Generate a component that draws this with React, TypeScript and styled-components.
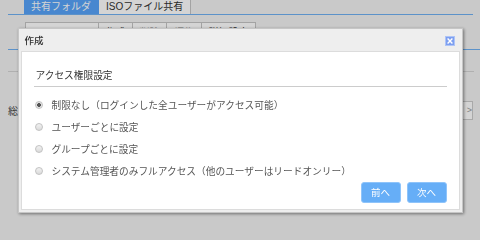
import styled, { createGlobalStyle } from "styled-components";

const GlobalStyle = createGlobalStyle`
  html, body {
    margin: 0;
    padding: 0;
    background: #f2f2f2;
    font-family: "Liberation Sans", "Noto Sans CJK JP", sans-serif;
  }
`;

const Page = styled.div`
  width: 480px;
  height: 240px;
  padding-left: 8px;
  box-sizing: border-box;
  overflow: hidden;
`;

const TabRow = styled.div`
  display: flex;
  padding-left: 16px;
  margin-right: 7px;
  border-bottom: 1px solid #6fb0f2;
`;

const Tab = styled.div<{ $active?: boolean }>`
  height: 14px;
  line-height: 14px;
  padding: 0 7px;
  font-size: 10px;
  color: ${(p) => (p.$active ? "#fff" : "#333")};
  background: ${(p) => (p.$active ? "#57a3f9" : "#fff")};
  border-right: 1px solid ${(p) => (p.$active ? "#57a3f9" : "#c4c4c4")};
`;

const Toolbar = styled.div`
  display: inline-flex;
  margin: 7px 0 0 17px;
  height: 20px;
  border: 1px solid #c4c4c4;
  background: #fff;
`;

const ToolCell = styled.div<{ $w: number; $muted?: boolean }>`
  width: ${(p) => p.$w}px;
  border-right: 1px solid #c4c4c4;
  font-size: 10px;
  line-height: 20px;
  text-align: center;
  color: ${(p) => (p.$muted ? "#aaa" : "#333")};
  &:last-child {
    border-right: none;
  }
`;

const BlueRule = styled.div`
  margin-top: 5px;
  border-top: 1px solid #6fb0f2;
`;

const GrayRule = styled.div`
  margin: 21px 6px 0 0;
  border-top: 1px solid #d4d4d4;
`;

const InfoRow = styled.div`
  display: flex;
  justify-content: space-between;
  align-items: center;
  margin: 29px 7px 0 0;
  height: 18px;
  font-size: 10px;
  color: #444;
`;

const PagerBox = styled.div`
  width: 10px;
  height: 17px;
  border: 1px solid #ccc;
  background: #fff;
  font-size: 9px;
  line-height: 17px;
  color: #999;
  text-align: right;
`;

const Overlay = styled.div`
  position: fixed;
  inset: 0;
  background: rgba(0, 0, 0, 0.17);
  display: flex;
  align-items: center;
  justify-content: center;
`;

const Dialog = styled.div`
  width: 445px;
  box-sizing: border-box;
  background: #eeeeee;
  border: 1px solid #c6c6c6;
  padding: 0 2px 2px;
  box-shadow: 1px 1px 3px rgba(0, 0, 0, 0.45);
  font-family: "Noto Sans CJK JP", sans-serif;
`;

const DialogHeader = styled.div`
  height: 22px;
  display: flex;
  align-items: center;
  justify-content: space-between;
  padding: 0 5px 0 4px;
`;

const DialogTitle = styled.div`
  font-size: 9.5px;
  color: #333;
  font-weight: 500;
  margin-top: 1px;
`;

const CloseButton = styled.div`
  width: 10px;
  height: 10px;
  display: flex;
  margin-top: 2px;
`;

const DialogBody = styled.div`
  background: #fff;
  border: 1px solid #dcdcdc;
`;

const SectionTitle = styled.div`
  margin: 16px 12px 0 12px;
  padding: 0 2px 4px;
  border-bottom: 1px solid #cccccc;
  font-size: 9.7px;
  line-height: 14px;
  color: #333;
`;

const OptionList = styled.div`
  margin-top: 7px;
  padding-left: 13px;
`;

const OptionRow = styled.label`
  display: flex;
  align-items: center;
  height: 22px;
  gap: 9px;
  font-size: 9.7px;
  color: #555;
`;

const Radio = styled.span<{ $checked?: boolean }>`
  width: 6px;
  height: 6px;
  flex: none;
  border-radius: 50%;
  border: 1px solid #c2c2c2;
  background: ${(p) =>
    p.$checked
      ? "radial-gradient(circle, #555 0 1.6px, #e4e4e4 2.2px)"
      : "linear-gradient(#f2f2f2, #dadada)"};
`;

const Footer = styled.div`
  display: flex;
  justify-content: flex-end;
  gap: 6px;
  padding: 0 12px 6px 0;
`;

const NavButton = styled.div`
  width: 40px;
  height: 21px;
  box-sizing: border-box;
  border: 1px solid #8fc4fa;
  border-radius: 3px;
  background: #66aef7;
  color: #fff;
  font-size: 9.5px;
  line-height: 19px;
  text-align: center;
`;

const options = [
  "制限なし（ログインした全ユーザーがアクセス可能）",
  "ユーザーごとに設定",
  "グループごとに設定",
  "システム管理者のみフルアクセス（他のユーザーはリードオンリー）",
];

const App = () => {
  return (
    <>
      <GlobalStyle />
      <Page>
        <TabRow>
          <Tab $active>共有フォルダ</Tab>
          <Tab>ISOファイル共有</Tab>
        </TabRow>
        <Toolbar>
          <ToolCell $w={72}>リフレッシュ</ToolCell>
          <ToolCell $w={33}>作成</ToolCell>
          <ToolCell $w={33} $muted>
            削除
          </ToolCell>
          <ToolCell $w={34} $muted>
            編集
          </ToolCell>
          <ToolCell $w={53}>詳細設定</ToolCell>
        </Toolbar>
        <BlueRule />
        <GrayRule />
        <InfoRow>
          <span>総</span>
          <PagerBox>&gt;</PagerBox>
        </InfoRow>
      </Page>
      <Overlay>
        <Dialog>
          <DialogHeader>
            <DialogTitle>作成</DialogTitle>
            <CloseButton>
              <svg width="10" height="10" viewBox="0 0 10 10">
                <rect x="0.5" y="0.5" width="9" height="9" fill="#7d9ff0" stroke="#aec4f6" />
                <path d="M2.6 2.6 L7.4 7.4 M7.4 2.6 L2.6 7.4" stroke="#fff" strokeWidth="1.4" />
              </svg>
            </CloseButton>
          </DialogHeader>
          <DialogBody>
            <SectionTitle>アクセス権限設定</SectionTitle>
            <OptionList>
              {options.map((o, i) => (
                <OptionRow key={o}>
                  <Radio $checked={i === 0} />
                  {o}
                </OptionRow>
              ))}
            </OptionList>
            <Footer>
              <NavButton>前へ</NavButton>
              <NavButton>次へ</NavButton>
            </Footer>
          </DialogBody>
        </Dialog>
      </Overlay>
    </>
  );
};

export default App;
